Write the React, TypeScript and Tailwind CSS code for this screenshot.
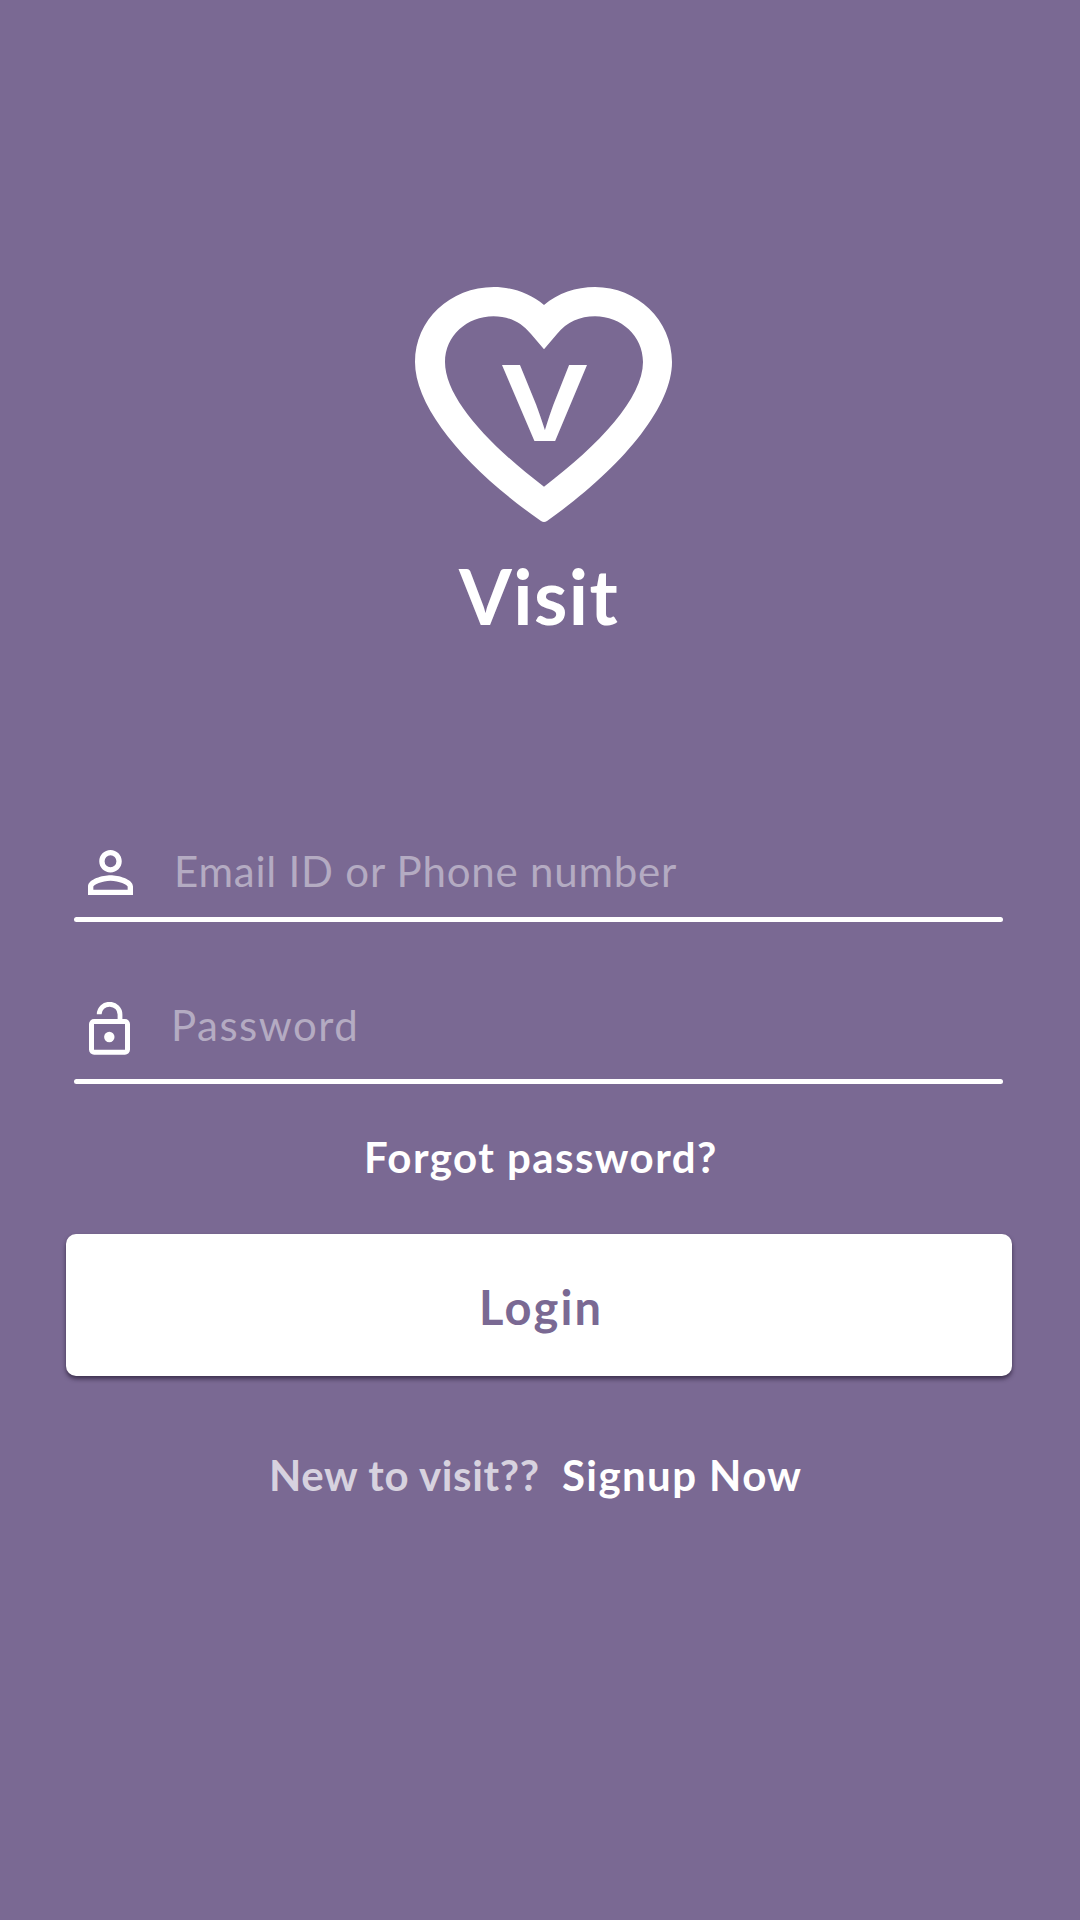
import type { ReactNode } from 'react';

function HeartLogo() {
  return (
    <svg className="ml-[415px] block h-[235px] w-[257px]" viewBox="0 0 257 235" fill="#fff">
      <path
        fillRule="evenodd"
        d="M129 18C115 6 96 0 79 0C35 0 0 33 0 75C0 122 54 184 126 234Q129 236 132 234C203 184 257 122 257 75C257 33 222 0 180 0C161 0 143 6 129 18ZM129 62.3L116 47C106 35 94 29.3 78.5 29.3C52 29.3 30 49 30 75C30 111 74 158 129 199.7C184 158 228 111 228 75C228 49 206 29.3 180 29.3C165 29.3 152 35 142 47Z"
      />
      <text
        x="84"
        y="154"
        fontSize="104"
        fontWeight="600"
        fontFamily="Inter, sans-serif"
        textLength="91"
        lengthAdjust="spacingAndGlyphs"
      >
        V
      </text>
    </svg>
  );
}

function PersonIcon() {
  return (
    <svg className="mt-[5px] block h-[45px] w-[45px]" viewBox="4 4 16 16" fill="#fff">
      <path d="M12 5.9a2.1 2.1 0 1 1 0 4.2 2.1 2.1 0 0 1 0-4.2m0 9c2.97 0 6.1 1.46 6.1 2.1v1.1H5.9V17c0-.64 3.13-2.1 6.1-2.1M12 4C9.79 4 8 5.79 8 8s1.79 4 4 4 4-1.79 4-4-1.79-4-4-4zm0 9c-2.67 0-8 1.34-8 4v3h16v-3c0-2.66-5.33-4-8-4z" />
    </svg>
  );
}

function OpenLockIcon() {
  return (
    <svg className="mt-[3px] block h-[53px] w-[41px]" viewBox="0 0 41 53" fill="none" stroke="#fff" strokeWidth="5">
      <rect x="2.5" y="19.5" width="36" height="30.7" rx="2.6" />
      <path d="M10.2 12.2A10.4 10.2 0 0 1 31 12.7V19" strokeWidth="4.8" />
      <circle cx="20.3" cy="35" r="5.2" fill="#fff" stroke="none" />
    </svg>
  );
}

function Field({ children }: { children: ReactNode }) {
  return <div className="ml-[74px] w-[929px]">{children}</div>;
}

function Rule() {
  return <div className="h-[5px] w-full rounded-full bg-white" />;
}

export default function App() {
  return (
    <main className="flex h-[1920px] w-[1080px] flex-col overflow-hidden bg-[#7a6993] pt-[287px] font-['Lato',sans-serif] text-white">
      <HeartLogo />
      <h1 className="mt-[36px] ml-[459px] text-[76px] leading-[76px] font-bold tracking-[1.4px]">Visit</h1>

      <form className="mt-[211px]" onSubmit={(e) => e.preventDefault()}>
        <Field>
          <div className="flex h-[72px] items-start pl-[14px]">
            <PersonIcon />
            <input
              type="text"
              placeholder="Email ID or Phone number"
              className="mt-px ml-[41px] h-[50px] w-[780px] bg-transparent text-[42px] leading-[50px] tracking-[0.78px] outline-none placeholder:text-[#b4abc2]"
            />
          </div>
          <Rule />
        </Field>

        <div className="mt-[77px]">
          <Field>
            <div className="flex h-[80px] items-start pl-[15px]">
              <OpenLockIcon />
              <input
                type="password"
                placeholder="Password"
                className="mt-px ml-[41px] h-[50px] w-[780px] bg-transparent text-[42px] leading-[50px] tracking-[1.5px] outline-none placeholder:text-[#b4abc2]"
              />
            </div>
            <Rule />
          </Field>
        </div>

        <a href="#" className="mt-[48px] ml-[364px] block text-[42px] leading-[50px] font-bold tracking-[1.45px]">
          Forgot password?
        </a>

        <button
          type="submit"
          className="mt-[52px] ml-[66px] flex h-[142px] w-[946px] items-center rounded-[10px] bg-white pt-[4px] pl-[413px] text-[47px] leading-[56px] font-bold tracking-[2.2px] text-[#7a6993] shadow-[0_3px_4px_rgba(30,20,45,0.65)]"
        >
          Login
        </button>
      </form>

      <p className="mt-[74px] ml-[269px] flex text-[42px] leading-[50px] font-bold">
        <span className="w-[293px] tracking-[0.62px] text-[#d7d2df]">New to visit??</span>
        <a href="#" className="tracking-[1.4px]">Signup Now</a>
      </p>
    </main>
  );
}
